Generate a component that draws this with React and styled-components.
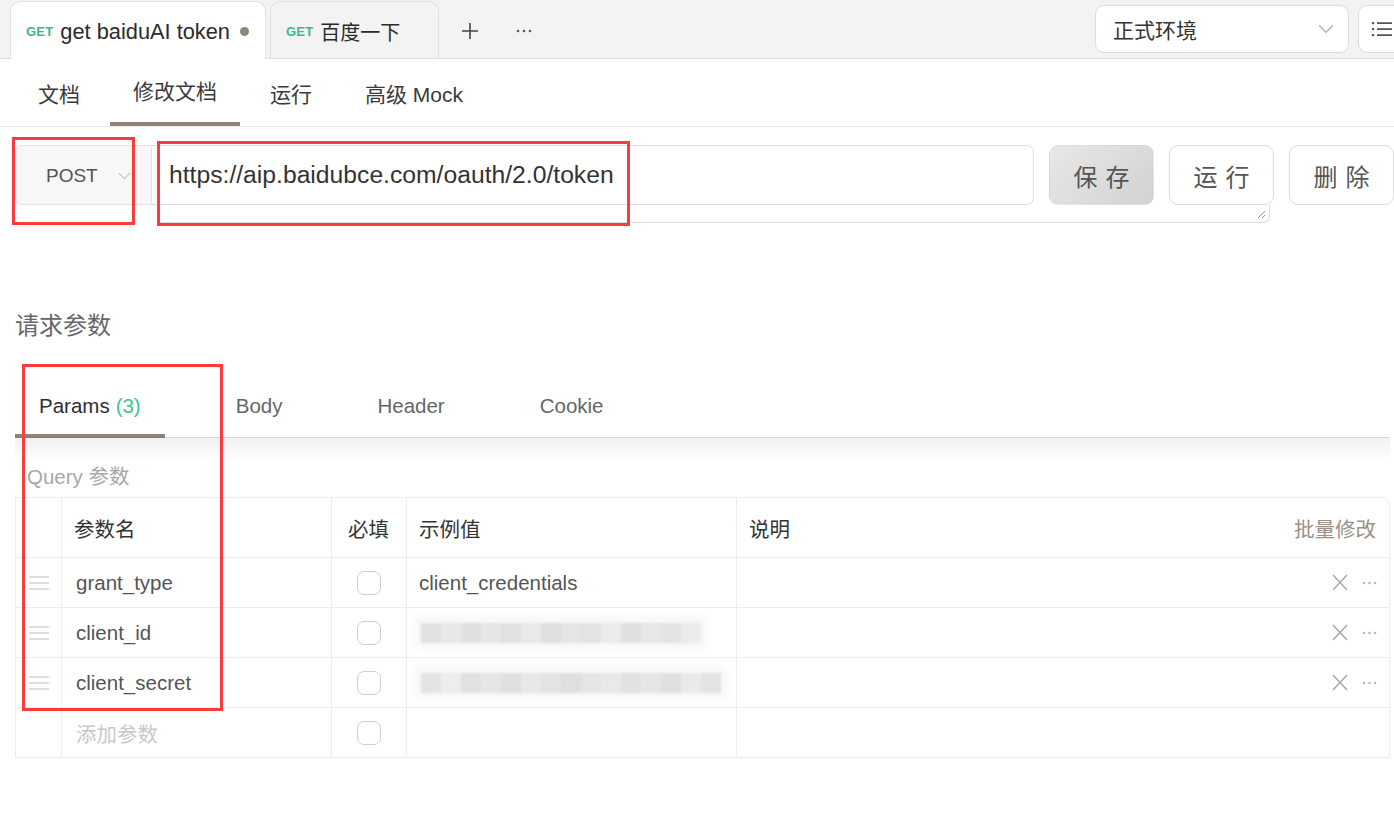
import React from "react";
import styled, { createGlobalStyle } from "styled-components";

const GlobalStyle = createGlobalStyle`
  html, body { margin: 0; padding: 0; background: #fff; }
  body {
    font-family: "Liberation Sans", "Noto Sans CJK SC", sans-serif;
    color: #333;
    width: 1394px;
    height: 828px;
    overflow: hidden;
  }
  * { box-sizing: border-box; }
`;

const Page = styled.div`
  position: relative;
  width: 1394px;
  height: 828px;
  background: #fff;
`;

/* ---------- top tabs ---------- */
const TabBar = styled.div`
  display: flex;
  align-items: flex-end;
  height: 59px;
  padding-left: 10px;
  background: #f3f3f3;
  border-bottom: 1px solid #dedede;
`;

const DocTab = styled.div`
  display: flex;
  align-items: center;
  height: 58px;
  margin-bottom: -1px;
  margin-right: 4px;
  padding: 3px 0 0 15px;
  width: ${(p) => p.$w}px;
  background: ${(p) => (p.$active ? "#fff" : "#f3f3f3")};
  border: 1px solid #e1e1e1;
  border-bottom: ${(p) => (p.$active ? "1px solid #fff" : "1px solid #dedede")};
  border-radius: 10px 10px 0 0;
`;

const MethodTag = styled.span`
  font-size: 13px;
  font-weight: 700;
  color: #3ab98b;
  margin-right: 7px;
  letter-spacing: 0.2px;
`;

const TabTitle = styled.span`
  font-size: ${(p) => (p.$cjk ? 20 : 21.8)}px;
  color: #2b2b2b;
`;

const UnsavedDot = styled.span`
  width: 9px;
  height: 9px;
  border-radius: 50%;
  background: #8f8579;
  margin-left: 10px;
`;

const BarIcon = styled.div`
  width: 54px;
  height: 58px;
  display: flex;
  align-items: center;
  justify-content: center;
  color: #555;
  padding-top: 3px;
`;

const BarRight = styled.div`
  margin-left: auto;
  align-self: stretch;
  display: flex;
  align-items: center;
  gap: 9px;
  padding-bottom: 5px;
  padding-top: 4px;
`;

const EnvSelect = styled.div`
  width: 254px;
  height: 48px;
  background: #fff;
  border: 1px solid #dcdcdc;
  border-radius: 9px;
  display: flex;
  align-items: center;
  justify-content: space-between;
  padding: 0 14px 0 17px;
  font-size: 21px;
  color: #333;
`;

const ListButton = styled.div`
  width: 36px;
  height: 48px;
  background: #fff;
  border: 1px solid #dcdcdc;
  border-right: none;
  border-radius: 9px 0 0 9px;
  display: flex;
  align-items: center;
  padding-left: 13px;
`;

/* ---------- sub tabs ---------- */
const SubTabs = styled.div`
  display: flex;
  gap: 7px;
  height: 68px;
  padding-left: 15px;
  border-bottom: 1px solid #e7e7e7;
`;

const SubTab = styled.div`
  position: relative;
  display: flex;
  align-items: center;
  padding: 0 23px ${(p) => (p.$active ? "6px" : "0")};
  font-size: 21px;
  color: #3a3a3a;
  &::after {
    content: "";
    display: ${(p) => (p.$active ? "block" : "none")};
    position: absolute;
    left: 0;
    right: 0;
    bottom: 0;
    height: 4px;
    background: #8f8579;
  }
`;

/* ---------- request line ---------- */
const RequestRow = styled.div`
  display: flex;
  align-items: stretch;
  height: 60px;
  margin-top: 18px;
  padding-left: 15px;
`;

const MethodSelect = styled.div`
  width: 137px;
  display: flex;
  align-items: center;
  justify-content: space-between;
  padding: 2px 20px 0 30px;
  background: #f7f7f7;
  border: 1px solid #e2e2e2;
  border-radius: 7px 0 0 7px;
  font-size: 19px;
  color: #555;
`;

const UrlInput = styled.div`
  flex: 1;
  display: flex;
  align-items: center;
  padding-left: 17px;
  border: 1px solid #dedede;
  border-left: none;
  border-radius: 0 7px 7px 0;
  font-size: 24.7px;
  color: #333;
  margin-right: 15px;
  padding-bottom: 1px;
`;

const ActionButton = styled.div`
  width: 105px;
  display: flex;
  align-items: center;
  justify-content: center;
  margin-right: 15px;
  font-size: 24px;
  letter-spacing: 8px;
  padding-left: 8px;
  color: #555;
  border-radius: 9px;
  border: 1px solid ${(p) => (p.$primary ? "transparent" : "#dcdcdc")};
  background: ${(p) =>
    p.$primary ? "linear-gradient(135deg, #e8e8e8 0%, #d2d2d2 100%)" : "#fff"};
  &:last-child { margin-right: 0; }
`;

const TextareaTail = styled.div`
  position: relative;
  width: 1112px;
  height: 18px;
  margin-left: 158px;
  border-bottom: 1px solid #dadada;
  border-right: 1px solid #dadada;
  border-bottom-right-radius: 7px;
`;

const ResizeGrip = styled.svg`
  position: absolute;
  right: 3px;
  bottom: 3px;
`;

/* ---------- params ---------- */
const SectionTitle = styled.div`
  margin-top: 88px;
  padding-left: 15px;
  font-size: 24px;
  line-height: 30px;
  color: #666;
`;

const ParamTabs = styled.div`
  position: relative;
  display: flex;
  gap: 47px;
  height: 61px;
  margin: 36px 4px 0 15px;
  border-bottom: 1px solid #e4e4e4;
  &::after {
    content: "";
    position: absolute;
    left: 0;
    right: 0;
    top: 100%;
    height: 24px;
    background: linear-gradient(to bottom, rgba(0, 0, 0, 0.06), rgba(0, 0, 0, 0));
    pointer-events: none;
  }
`;

const ParamTab = styled.div`
  position: relative;
  display: flex;
  align-items: center;
  padding: 0 24px 2px;
  font-size: 20.5px;
  color: ${(p) => (p.$active ? "#2e2e2e" : "#666")};
  &::after {
    content: "";
    display: ${(p) => (p.$active ? "block" : "none")};
    position: absolute;
    left: 0;
    right: 0;
    bottom: -1px;
    height: 4px;
    background: #8f8579;
  }
`;

const Count = styled.span`
  color: #3cc795;
  margin-left: 6px;
`;

const QueryLabel = styled.div`
  padding: 22px 0 0 27px;
  height: 59px;
  font-size: 20.5px;
  color: #a8a8a8;
`;

const Table = styled.div`
  margin-left: 15px;
  width: 1375px;
  border: 1px solid #ececec;
  border-top-right-radius: 8px;
`;

const Row = styled.div`
  display: grid;
  grid-template-columns: 45px 270px 75px 330px 1fr;
  height: ${(p) => (p.$head ? 59 : 50)}px;
  border-top: ${(p) => (p.$head ? "none" : "1px solid #ececec")};
`;

const Cell = styled.div`
  display: flex;
  align-items: center;
  justify-content: ${(p) => p.$justify || "flex-start"};
  padding: 0 ${(p) => (p.$pr != null ? p.$pr : 0)}px 0 ${(p) => (p.$pl != null ? p.$pl : 12)}px;
  border-left: ${(p) => (p.$first ? "none" : "1px solid #ececec")};
  font-size: 20.5px;
  color: ${(p) => p.$color || (p.$head ? "#333" : "#555")};
  overflow: hidden;
  white-space: nowrap;
`;

const Batch = styled.span`
  margin-left: auto;
  color: #9b9084;
`;

const Check = styled.div`
  width: 24px;
  height: 24px;
  border: 1px solid #cfcfcf;
  border-radius: 7px;
  background: #fff;
`;

const Masked = styled.div`
  display: flex;
  height: 20px;
  margin-left: 2px;
  filter: blur(1.2px);
  box-shadow: 0 0 10px 6px rgba(245, 245, 245, 0.9);
`;

const Block = styled.div`
  width: 20px;
  height: 100%;
`;

const RowActions = styled.div`
  margin-left: auto;
  display: flex;
  align-items: center;
  gap: 14px;
  padding-right: 12px;
`;

const Annotation = styled.div`
  position: absolute;
  border: 3px solid #fa3c3c;
  pointer-events: none;
`;

/* ---------- icons ---------- */
const Chevron = ({ size = 14, color = "#b5b5b5" }) => (
  <svg width={size} height={size * 0.6} viewBox="0 0 14 8" fill="none">
    <path d="M1 1l6 6 6-6" stroke={color} strokeWidth="1.3" />
  </svg>
);

const PlusIcon = () => (
  <svg width="18" height="18" viewBox="0 0 18 18">
    <path d="M9 1v16M1 9h16" stroke="#444" strokeWidth="1.6" />
  </svg>
);

const MoreIcon = ({ color = "#555", size = 16 }) => (
  <svg width={size} height="4" viewBox="0 0 16 4">
    <circle cx="2" cy="2" r="1.3" fill={color} />
    <circle cx="8" cy="2" r="1.3" fill={color} />
    <circle cx="14" cy="2" r="1.3" fill={color} />
  </svg>
);

const ListIcon = () => (
  <svg width="20" height="16" viewBox="0 0 20 16">
    <g fill="#555">
      <rect x="0" y="1" width="2.2" height="2.2" />
      <rect x="0" y="7" width="2.2" height="2.2" />
      <rect x="0" y="13" width="2.2" height="2.2" />
    </g>
    <g stroke="#555" strokeWidth="1.6">
      <path d="M5 2.1h15M5 8.1h15M5 14.1h15" />
    </g>
  </svg>
);

const DragIcon = () => (
  <svg width="20" height="14" viewBox="0 0 20 14">
    <path d="M0 1h20M0 7h20M0 13h20" stroke="#d4d4d4" strokeWidth="1.6" />
  </svg>
);

const CloseIcon = () => (
  <svg width="16" height="17" viewBox="0 0 16 17">
    <path d="M1 1l14 15M15 1L1 16" stroke="#a8a8a8" strokeWidth="1.5" />
  </svg>
);

const grayA = ["#e2e2e2", "#e8e8e8", "#e0e0e0", "#e6e6e6", "#e1e1e1", "#e9e9e9", "#dfdfdf", "#e5e5e5", "#e3e3e3", "#ebebeb", "#e0e0e0", "#e7e7e7", "#e4e4e4", "#ececec"];
const grayB = ["#e4e4e4", "#ededed", "#e1e1e1", "#e6e6e6", "#e0e0e0", "#e8e8e8", "#e3e3e3", "#dfdfdf", "#e5e5e5", "#e9e9e9", "#e2e2e2", "#e6e6e6", "#e0e0e0", "#eaeaea", "#e3e3e3"];

const MaskedValue = ({ colors }) => (
  <Masked>
    {colors.map((c, i) => (
      <Block key={i} style={{ background: c }} />
    ))}
  </Masked>
);

const params = [
  { name: "grant_type", value: "client_credentials" },
  { name: "client_id", mask: grayA },
  { name: "client_secret", mask: grayB },
];

export default function App() {
  return (
    <Page>
      <GlobalStyle />
      <TabBar>
        <DocTab $active $w={256}>
          <MethodTag>GET</MethodTag>
          <TabTitle>get baiduAI token</TabTitle>
          <UnsavedDot />
        </DocTab>
        <DocTab $w={169}>
          <MethodTag>GET</MethodTag>
          <TabTitle $cjk>百度一下</TabTitle>
        </DocTab>
        <BarIcon>
          <PlusIcon />
        </BarIcon>
        <BarIcon>
          <MoreIcon />
        </BarIcon>
        <BarRight>
          <EnvSelect>
            <span>正式环境</span>
            <Chevron size={16} />
          </EnvSelect>
          <ListButton>
            <ListIcon />
          </ListButton>
        </BarRight>
      </TabBar>

      <SubTabs>
        <SubTab>文档</SubTab>
        <SubTab $active>修改文档</SubTab>
        <SubTab>运行</SubTab>
        <SubTab>高级 Mock</SubTab>
      </SubTabs>

      <RequestRow>
        <MethodSelect>
          <span>POST</span>
          <Chevron size={13} color="#c4c4c4" />
        </MethodSelect>
        <UrlInput>https://aip.baidubce.com/oauth/2.0/token</UrlInput>
        <ActionButton $primary>保存</ActionButton>
        <ActionButton>运行</ActionButton>
        <ActionButton>删除</ActionButton>
      </RequestRow>
      <TextareaTail>
        <ResizeGrip width="10" height="10" viewBox="0 0 10 10">
          <path d="M9 2L2 9M9 6L6 9" stroke="#999" strokeWidth="1" />
        </ResizeGrip>
      </TextareaTail>

      <SectionTitle>请求参数</SectionTitle>

      <ParamTabs>
        <ParamTab $active>
          Params<Count>(3)</Count>
        </ParamTab>
        <ParamTab>Body</ParamTab>
        <ParamTab>Header</ParamTab>
        <ParamTab>Cookie</ParamTab>
      </ParamTabs>

      <QueryLabel>Query 参数</QueryLabel>

      <Table>
        <Row $head>
          <Cell $first $head />
          <Cell $head>参数名</Cell>
          <Cell $head $pl={16}>必填</Cell>
          <Cell $head>示例值</Cell>
          <Cell $head $pr={13}>
            说明
            <Batch>批量修改</Batch>
          </Cell>
        </Row>
        {params.map((p) => (
          <Row key={p.name}>
            <Cell $first $justify="center" $pl={0}>
              <DragIcon />
            </Cell>
            <Cell $pl={14}>{p.name}</Cell>
            <Cell $justify="center" $pl={0}>
              <Check />
            </Cell>
            <Cell>{p.mask ? <MaskedValue colors={p.mask} /> : p.value}</Cell>
            <Cell>
              <RowActions>
                <CloseIcon />
                <MoreIcon color="#b5b5b5" size={15} />
              </RowActions>
            </Cell>
          </Row>
        ))}
        <Row>
          <Cell $first />
          <Cell $pl={14} $color="#c8c8c8">添加参数</Cell>
          <Cell $justify="center" $pl={0}>
            <Check />
          </Cell>
          <Cell />
          <Cell />
        </Row>
      </Table>

      <Annotation style={{ left: 12, top: 137, width: 123, height: 88 }} />
      <Annotation style={{ left: 157, top: 141, width: 473, height: 85 }} />
      <Annotation style={{ left: 22, top: 364, width: 201, height: 347 }} />
    </Page>
  );
}
